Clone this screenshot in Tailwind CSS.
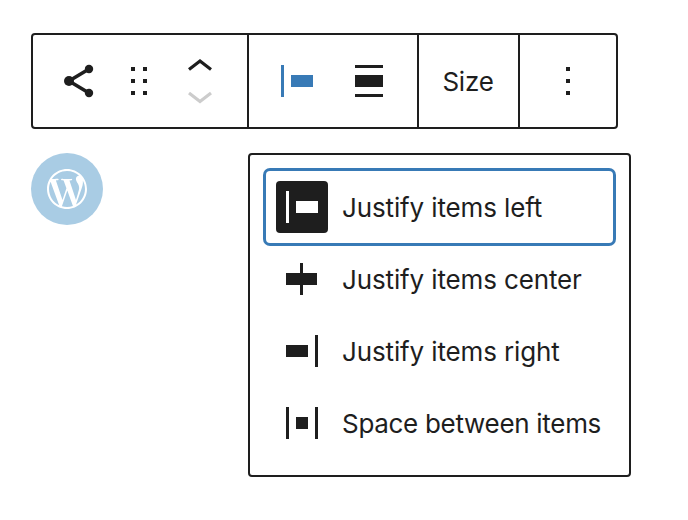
<!DOCTYPE html>
<html lang="en">
<head>
  <meta charset="UTF-8" />
  <title>Block toolbar</title>
  <script src="https://cdn.jsdelivr.net/npm/@tailwindcss/browser@4"></script>
</head>
<body class="bg-white text-[#1e1e1e] font-[Inter,sans-serif]">
  <div class="pt-[33px] pl-[31px]">
    <!-- toolbar -->
    <div class="flex w-[587px] h-[96px] border-2 border-[#1e1e1e] rounded-[4px]">
      <div class="flex items-center w-[216px] pl-[22px] border-r-2 border-[#1e1e1e]">
        <svg class="w-12 h-12" viewBox="0 0 48 48" fill="#1e1e1e">
          <path d="M14 24 34 12M14 24l20 12" stroke="#1e1e1e" stroke-width="3.6" fill="none" />
          <circle cx="14" cy="24" r="5" />
          <circle cx="34" cy="12" r="4.2" />
          <circle cx="34" cy="36" r="4.2" />
        </svg>
        <svg class="w-12 h-12 ml-3" viewBox="0 0 24 24" fill="#1e1e1e">
          <path d="M8 7h2V5H8v2zm0 6h2v-2H8v2zm0 6h2v-2H8v2zm6-14v2h2V5h-2zm0 8h2v-2h-2v2zm0 6h2v-2h-2v2z" />
        </svg>
        <svg class="w-12 h-12 ml-[13px]" viewBox="0 0 48 48" fill="none" stroke-width="3.2">
          <path d="M13 12.5 24 4 35 12.5" stroke="#1e1e1e" />
          <path d="M13 36 24 44.5 35 36" stroke="#cccccc" />
        </svg>
      </div>
      <div class="flex items-center gap-6 w-[170px] pl-6 border-r-2 border-[#1e1e1e]">
        <svg class="w-12 h-12" viewBox="0 0 24 24" fill="#387ab6">
          <path d="M9 9v6h11V9H9zM4 20h1.5V4H4v16z" />
        </svg>
        <svg class="w-12 h-12" viewBox="0 0 24 24" fill="#1e1e1e">
          <path d="M5 4v1.5h14V4H5zm14 16v-1.5H5V20h14zM5 9v6h14V9H5z" />
        </svg>
      </div>
      <div class="flex items-center justify-center w-[101px] pt-[1px] pr-[1px] border-r-2 border-[#1e1e1e] text-[26px] tracking-[-0.25px]">Size</div>
      <div class="flex items-center w-[96px] pl-6">
        <svg class="w-12 h-12" viewBox="0 0 24 24" fill="#1e1e1e">
          <path d="M13 19h-2v-2h2v2zm0-6h-2v-2h2v2zm0-6h-2V5h2v2z" />
        </svg>
      </div>
    </div>

    <div class="flex mt-[24px]">
      <!-- avatar -->
      <div class="flex items-center justify-center w-[72px] h-[72px] rounded-full bg-[#a9cce4]">
        <svg class="w-10 h-10" viewBox="0 0 24 24" fill="#ffffff">
          <path d="M21.469 6.825c.84 1.537 1.318 3.3 1.318 5.175 0 3.979-2.156 7.456-5.363 9.325l3.295-9.527c.615-1.54.82-2.771.82-3.864 0-.405-.026-.78-.07-1.11m-7.981.105c.647-.03 1.232-.105 1.232-.105.582-.075.514-.93-.067-.899 0 0-1.755.135-2.88.135-1.064 0-2.85-.15-2.85-.15-.585-.03-.661.855-.075.885 0 0 .54.061 1.125.09l1.68 4.605-2.37 7.08L5.354 6.9c.649-.03 1.234-.1 1.234-.1.585-.075.516-.93-.065-.896 0 0-1.746.138-2.874.138-.2 0-.438-.008-.69-.015C4.911 3.15 8.235 1.215 12 1.215c2.809 0 5.365 1.072 7.286 2.833-.046-.003-.091-.009-.141-.009-1.06 0-1.812.923-1.812 1.914 0 .89.513 1.643 1.06 2.531.411.72.89 1.643.89 2.977 0 .915-.354 1.994-.821 3.479l-1.075 3.585-3.9-11.61.001.014zM12 22.784c-1.059 0-2.081-.153-3.048-.437l3.237-9.406 3.315 9.087c.024.053.05.101.078.149-1.12.393-2.325.609-3.582.609M1.211 12c0-1.564.336-3.05.935-4.39L7.29 21.709C3.694 19.96 1.212 16.271 1.211 12M12 0C5.385 0 0 5.385 0 12s5.385 12 12 12 12-5.385 12-12S18.615 0 12 0" />
        </svg>
      </div>

      <!-- dropdown -->
      <div class="ml-[145px] w-[383px] h-[324px] border-2 border-[#1e1e1e] rounded-[4px] p-4 text-[26px] tracking-[-0.13px]">
        <div class="flex items-center h-[72px] pl-[10px] rounded-[4px] ring-3 ring-[#387ab6]">
          <span class="p-[2px] rounded-[4px] bg-[#1e1e1e]">
            <svg class="block w-12 h-12" viewBox="0 0 24 24" fill="#ffffff">
              <path d="M9 9v6h11V9H9zM4 20h1.5V4H4v16z" />
            </svg>
          </span>
          <span class="ml-[14px] pt-[1px]">Justify items left</span>
        </div>
        <div class="flex items-center h-[72px] pl-[12px]">
          <svg class="w-12 h-12" viewBox="0 0 24 24" fill="#1e1e1e">
            <path d="M12.5 15v5H11v-5H4V9h7V4h1.5v5h7v6h-7Z" />
          </svg>
          <span class="ml-[16px] pt-[1px]">Justify items center</span>
        </div>
        <div class="flex items-center h-[72px] pl-[12px]">
          <svg class="w-12 h-12" viewBox="0 0 24 24" fill="#1e1e1e">
            <path d="M4 15h11V9H4v6zM18.5 4v16H20V4h-1.5z" />
          </svg>
          <span class="ml-[16px] pt-[1px]">Justify items right</span>
        </div>
        <div class="flex items-center h-[72px] pl-[12px]">
          <svg class="w-12 h-12" viewBox="0 0 24 24" fill="#1e1e1e">
            <path d="M9 15h6V9H9v6zm-5 5h1.5V4H4v16zM18.5 4v16H20V4h-1.5z" />
          </svg>
          <span class="ml-[16px] pt-[1px] tracking-[-0.3px]">Space between items</span>
        </div>
      </div>
    </div>
  </div>
</body>
</html>
